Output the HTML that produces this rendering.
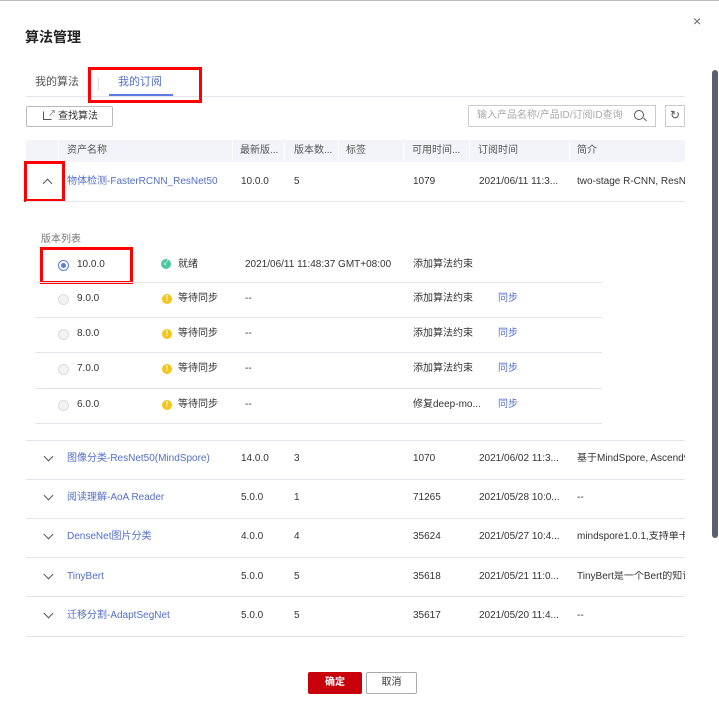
<!DOCTYPE html>
<html><head><meta charset="utf-8"><style>
*{margin:0;padding:0;box-sizing:border-box}
body{width:719px;height:720px;background:#fff;position:relative;overflow:hidden;font-family:"Liberation Sans","Noto Sans CJK SC",sans-serif;font-size:10px;color:#333}
.a{position:absolute;white-space:nowrap;line-height:12px}
.ln{position:absolute;height:1px;background:#e3e5ea}
.lk{color:#526ecc}
.rb{position:absolute;border:3px solid #f00}
.hd{color:#555}
.chev{position:absolute;width:7px;height:7px;border-right:1.3px solid #555;border-bottom:1.3px solid #555;transform:rotate(45deg)}
.rad{position:absolute;width:11px;height:11px;border-radius:50%;border:1px solid #ddd;background:#f3f3f3}
.warn{position:absolute;width:10px;height:10px;border-radius:50%;background:#f5c518;color:#fff;font-size:8px;font-weight:bold;text-align:center;line-height:10px}
</style></head><body>
<div class="ln" style="top:0;left:0;width:719px;background:#bbb"></div>
<div class="a" style="left:25px;top:29px;font-size:14px;line-height:16px;font-weight:bold;color:#222">算法管理</div>
<div class="a" style="left:693px;top:13px;font-size:14px;line-height:16px;color:#666">×</div>
<div class="a" style="left:712px;top:70px;width:6px;height:468px;background:#5b6070;border-radius:3px"></div>

<div class="a" style="left:35px;top:76px;font-size:11px;color:#555">我的算法</div>
<div class="a" style="left:98px;top:78px;width:1px;height:12px;background:#ddd"></div>
<div class="a lk" style="left:118px;top:76px;font-size:11px">我的订阅</div>
<div class="ln" style="top:96px;left:26px;width:659px"></div>
<div class="a" style="left:109px;top:94px;width:64px;height:2px;background:#5b7ce0"></div>
<div class="rb" style="left:88px;top:67px;width:114px;height:36px"></div>

<div class="a" style="left:26px;top:106px;width:87px;height:21px;border:1px solid #bbb;border-radius:2px"></div>
<div class="a" style="left:43px;top:111px;width:9px;height:9px;border:1px solid #555;border-top-color:transparent;border-right-color:transparent"></div>
<div class="a" style="left:48px;top:108px;font-size:8px;color:#555">↗</div>
<div class="a" style="left:58px;top:111px;font-size:10px;color:#333">查找算法</div>
<div class="a" style="left:468px;top:105px;width:188px;height:22px;border:1px solid #ccc"></div>
<div class="a" style="left:477px;top:110px;color:#aaa">输入产品名称/产品ID/订阅ID查询</div>
<div class="a" style="left:634px;top:110px;width:10px;height:10px;border:1.3px solid #555;border-radius:50%"></div>
<div class="a" style="left:643px;top:119px;width:4px;height:1.3px;background:#555;transform:rotate(45deg)"></div>
<div class="a" style="left:665px;top:105px;width:20px;height:22px;border:1px solid #ccc"></div>
<div class="a" style="left:670px;top:109px;font-size:12px;color:#555">↻</div>

<div class="a" style="left:26px;top:140px;width:659px;height:22px;background:#f2f4f9"></div>
<div class="a hd" style="left:67px;top:145px">资产名称</div>
<div class="a hd" style="left:240px;top:145px">最新版...</div>
<div class="a hd" style="left:294px;top:145px">版本数...</div>
<div class="a hd" style="left:346px;top:145px">标签</div>
<div class="a hd" style="left:412px;top:145px">可用时间...</div>
<div class="a hd" style="left:478px;top:145px">订阅时间</div>
<div class="a hd" style="left:577px;top:145px">简介</div>
<div class="a" style="left:58px;top:142px;width:1px;height:18px;background:#fff"></div>
<div class="a" style="left:232px;top:142px;width:1px;height:18px;background:#fff"></div>
<div class="a" style="left:284px;top:142px;width:1px;height:18px;background:#fff"></div>
<div class="a" style="left:338px;top:142px;width:1px;height:18px;background:#fff"></div>
<div class="a" style="left:403px;top:142px;width:1px;height:18px;background:#fff"></div>
<div class="a" style="left:469px;top:142px;width:1px;height:18px;background:#fff"></div>
<div class="a" style="left:569px;top:142px;width:1px;height:18px;background:#fff"></div>

<div class="chev" style="left:44px;top:180px;transform:rotate(225deg)"></div>
<div class="a lk" style="left:67px;top:176px">物体检测-FasterRCNN_ResNet50</div>
<div class="a" style="left:241px;top:176px">10.0.0</div>
<div class="a" style="left:294px;top:176px">5</div>
<div class="a" style="left:413px;top:176px">1079</div>
<div class="a" style="left:479px;top:176px">2021/06/11 11:3...</div>
<div class="a" style="left:577px;top:176px;width:108px;overflow:hidden">two-stage R-CNN, ResNet</div>
<div class="rb" style="left:24px;top:161px;width:41px;height:41px"></div>
<div class="ln" style="top:201px;left:26px;width:659px"></div>

<div class="a" style="left:41px;top:234px;color:#777">版本列表</div>
<div class="rad" style="left:58px;top:260px;border-color:#5b7ce0;background:#fff"></div>
<div class="a" style="left:61px;top:263px;width:5px;height:5px;border-radius:50%;background:#5b7ce0"></div>
<div class="a" style="left:77px;top:259px">10.0.0</div>
<div class="a" style="left:161px;top:259px;width:10px;height:10px;border-radius:50%;background:#4bc8a0;color:#fff;font-size:7px;text-align:center;line-height:10px">✓</div>
<div class="a" style="left:178px;top:259px">就绪</div>
<div class="a" style="left:245px;top:259px">2021/06/11 11:48:37 GMT+08:00</div>
<div class="a" style="left:413px;top:259px">添加算法约束</div>
<div class="rb" style="left:40px;top:247px;width:93px;height:37px"></div>

<div class="ln" style="top:282px;left:35px;width:567px"></div>
<div class="rad" style="left:58px;top:294px"></div><div class="a" style="left:77px;top:293px">9.0.0</div><div class="warn" style="left:162px;top:294px">!</div><div class="a" style="left:178px;top:293px">等待同步</div><div class="a" style="left:245px;top:293px">--</div><div class="a" style="left:413px;top:293px">添加算法约束</div><div class="a lk" style="left:498px;top:293px">同步</div>
<div class="ln" style="top:317px;left:35px;width:567px"></div>
<div class="rad" style="left:58px;top:329px"></div><div class="a" style="left:77px;top:328px">8.0.0</div><div class="warn" style="left:162px;top:329px">!</div><div class="a" style="left:178px;top:328px">等待同步</div><div class="a" style="left:245px;top:328px">--</div><div class="a" style="left:413px;top:328px">添加算法约束</div><div class="a lk" style="left:498px;top:328px">同步</div>
<div class="ln" style="top:352px;left:35px;width:567px"></div>
<div class="rad" style="left:58px;top:364px"></div><div class="a" style="left:77px;top:363px">7.0.0</div><div class="warn" style="left:162px;top:364px">!</div><div class="a" style="left:178px;top:363px">等待同步</div><div class="a" style="left:245px;top:363px">--</div><div class="a" style="left:413px;top:363px">添加算法约束</div><div class="a lk" style="left:498px;top:363px">同步</div>
<div class="ln" style="top:388px;left:35px;width:567px"></div>
<div class="rad" style="left:58px;top:400px"></div><div class="a" style="left:77px;top:399px">6.0.0</div><div class="warn" style="left:162px;top:400px">!</div><div class="a" style="left:178px;top:399px">等待同步</div><div class="a" style="left:245px;top:399px">--</div><div class="a" style="left:413px;top:399px">修复deep-mo...</div><div class="a lk" style="left:498px;top:399px">同步</div>
<div class="ln" style="top:423px;left:35px;width:567px"></div>
<div class="ln" style="top:440px;left:26px;width:659px"></div>

<div class="chev" style="left:45px;top:453px"></div>
<div class="a lk" style="left:67px;top:453px">图像分类-ResNet50(MindSpore)</div><div class="a" style="left:241px;top:453px">14.0.0</div><div class="a" style="left:294px;top:453px">3</div><div class="a" style="left:413px;top:453px">1070</div><div class="a" style="left:479px;top:453px">2021/06/02 11:3...</div><div class="a" style="left:577px;top:453px;width:108px;overflow:hidden">基于MindSpore, Ascend9</div>
<div class="ln" style="top:479px;left:26px;width:659px"></div>
<div class="chev" style="left:45px;top:492px"></div>
<div class="a lk" style="left:67px;top:492px">阅读理解-AoA Reader</div><div class="a" style="left:241px;top:492px">5.0.0</div><div class="a" style="left:294px;top:492px">1</div><div class="a" style="left:413px;top:492px">71265</div><div class="a" style="left:479px;top:492px">2021/05/28 10:0...</div><div class="a" style="left:577px;top:492px">--</div>
<div class="ln" style="top:518px;left:26px;width:659px"></div>
<div class="chev" style="left:45px;top:531px"></div>
<div class="a lk" style="left:67px;top:531px">DenseNet图片分类</div><div class="a" style="left:241px;top:531px">4.0.0</div><div class="a" style="left:294px;top:531px">4</div><div class="a" style="left:413px;top:531px">35624</div><div class="a" style="left:479px;top:531px">2021/05/27 10:4...</div><div class="a" style="left:577px;top:531px;width:108px;overflow:hidden">mindspore1.0.1,支持单卡</div>
<div class="ln" style="top:557px;left:26px;width:659px"></div>
<div class="chev" style="left:45px;top:571px"></div>
<div class="a lk" style="left:67px;top:571px">TinyBert</div><div class="a" style="left:241px;top:571px">5.0.0</div><div class="a" style="left:294px;top:571px">5</div><div class="a" style="left:413px;top:571px">35618</div><div class="a" style="left:479px;top:571px">2021/05/21 11:0...</div><div class="a" style="left:577px;top:571px;width:108px;overflow:hidden">TinyBert是一个Bert的知识</div>
<div class="ln" style="top:596px;left:26px;width:659px"></div>
<div class="chev" style="left:45px;top:610px"></div>
<div class="a lk" style="left:67px;top:610px">迁移分割-AdaptSegNet</div><div class="a" style="left:241px;top:610px">5.0.0</div><div class="a" style="left:294px;top:610px">5</div><div class="a" style="left:413px;top:610px">35617</div><div class="a" style="left:479px;top:610px">2021/05/20 11:4...</div><div class="a" style="left:577px;top:610px">--</div>
<div class="ln" style="top:636px;left:26px;width:659px"></div>

<div class="a" style="left:308px;top:672px;width:54px;height:22px;background:#c7000b;color:#fff;text-align:center;line-height:22px;font-weight:bold;border-radius:2px">确定</div>
<div class="a" style="left:366px;top:672px;width:51px;height:22px;border:1px solid #aaa;text-align:center;line-height:20px;border-radius:2px">取消</div>
</body></html>
